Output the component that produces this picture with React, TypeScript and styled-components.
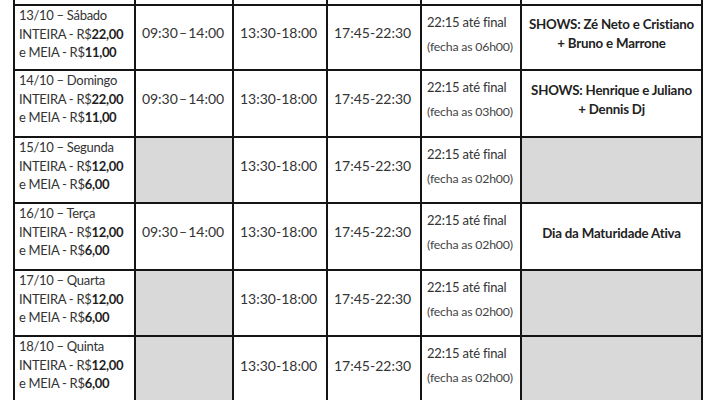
import React from "react";
import styled, { createGlobalStyle } from "styled-components";

const Global = createGlobalStyle`
  html, body { margin: 0; padding: 0; background: #ffffff; }
  body { font-family: Lato, "Open Sans", sans-serif; color: #2b2b2b; }
`;

const Table = styled.div`
  display: grid;
  grid-template-columns: 119px 96px 92px 92px 98px 179px;
  grid-template-rows: 4px 63px 65px 64px 65px 64px 66px;
  gap: 2px;
  padding: 0 2px;
  margin-left: 13px;
  width: max-content;
  background: #141414;
  height: 400px;
  overflow: hidden;
`;

const Cell = styled.div<{ $gray?: boolean }>`
  background: ${(p) => (p.$gray ? "#d9d9d9" : "#ffffff")};
  overflow: hidden;
`;

const DayCell = styled(Cell)`
  padding: 0 0 0 4px;
  font-size: 13px;
  line-height: 18.6px;
  letter-spacing: -0.3px;
  white-space: nowrap;
  color: #333;
`;

const B = styled.b`
  font-weight: 700;
  color: #1e1e1e;
`;

const TimeCell = styled(Cell)<{ $center?: boolean }>`
  display: flex;
  align-items: center;
  justify-content: ${(p) => (p.$center ? "center" : "flex-start")};
  padding: 0 ${(p) => (p.$center ? "2px" : "0")} 10px ${(p) => (p.$center ? "0" : "6px")};
  font-size: 14px;
  letter-spacing: 0;
  word-spacing: ${(p) => (p.$center ? "-2.5px" : "0")};
  white-space: nowrap;
  color: #333;
`;

const NightCell = styled(Cell)`
  padding: 4px 0 0 5px;
  color: #333;
  white-space: nowrap;
`;

const NightMain = styled.div`
  font-size: 13px;
  line-height: 24px;
  letter-spacing: -0.2px;
`;

const NightNote = styled.div`
  font-size: 12.3px;
  line-height: 26px;
  letter-spacing: -0.2px;
  color: #444;
`;

const ShowCell = styled(Cell)`
  display: flex;
  align-items: center;
  justify-content: center;
  text-align: center;
  padding-bottom: 7px;
  font-size: 13.3px;
  font-weight: 700;
  line-height: 19px;
  letter-spacing: -0.2px;
  color: #222;
`;

type Row = {
  day: string;
  full: string;
  half: string;
  morning: boolean;
  close: string;
  show: string[] | null;
};

const rows: Row[] = [
  { day: "13/10 – Sábado", full: "22,00", half: "11,00", morning: true, close: "06h00", show: ["SHOWS: Zé Neto e Cristiano", "+ Bruno e Marrone"] },
  { day: "14/10 – Domingo", full: "22,00", half: "11,00", morning: true, close: "03h00", show: ["SHOWS: Henrique e Juliano", "+ Dennis Dj"] },
  { day: "15/10 – Segunda", full: "12,00", half: "6,00", morning: false, close: "02h00", show: null },
  { day: "16/10 – Terça", full: "12,00", half: "6,00", morning: true, close: "02h00", show: ["Dia da Maturidade Ativa"] },
  { day: "17/10 – Quarta", full: "12,00", half: "6,00", morning: false, close: "02h00", show: null },
  { day: "18/10 – Quinta", full: "12,00", half: "6,00", morning: false, close: "02h00", show: null },
];

export default function App() {
  return (
    <>
      <Global />
      <Table>
        {Array.from({ length: 6 }).map((_, i) => (
          <Cell key={`h${i}`} />
        ))}
        {rows.map((r) => (
          <React.Fragment key={r.day}>
            <DayCell>
              <div>{r.day}</div>
              <div>
                INTEIRA - R$<B>{r.full}</B>
              </div>
              <div>
                e MEIA - R$<B>{r.half}</B>
              </div>
            </DayCell>
            {r.morning ? <TimeCell $center>09:30 – 14:00</TimeCell> : <Cell $gray />}
            <TimeCell>13:30-18:00</TimeCell>
            <TimeCell>17:45-22:30</TimeCell>
            <NightCell>
              <NightMain>22:15 até final</NightMain>
              <NightNote>(fecha as {r.close})</NightNote>
            </NightCell>
            {r.show ? (
              <ShowCell>
                <div>
                  {r.show.map((s) => (
                    <div key={s}>{s}</div>
                  ))}
                </div>
              </ShowCell>
            ) : (
              <Cell $gray />
            )}
          </React.Fragment>
        ))}
      </Table>
    </>
  );
}
